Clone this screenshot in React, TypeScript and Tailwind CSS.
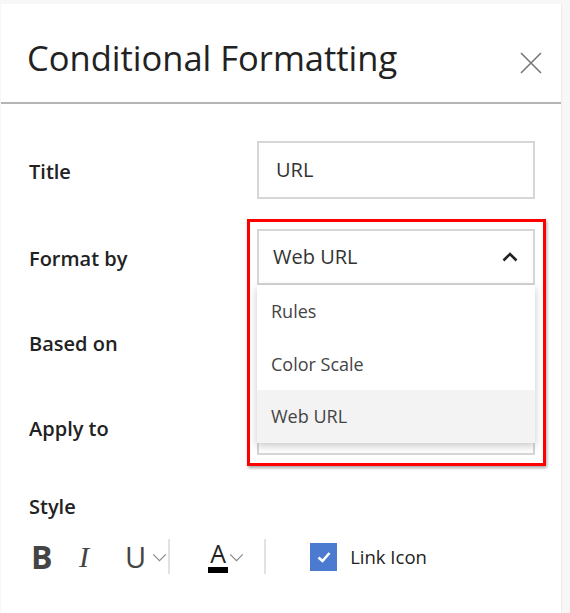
const font = { fontFamily: '"Open Sans", "Noto Sans", Arial, sans-serif' };

function Chevron({ className = "" }: { className?: string }) {
  return (
    <svg viewBox="0 0 16 10" className={className} fill="none" stroke="currentColor">
      <path d="M1 1.5 L8 8.5 L15 1.5" strokeWidth="1.3" />
    </svg>
  );
}

function Row({ label, children, first }: { label: string; children?: React.ReactNode; first?: boolean }) {
  return (
    <div className={`flex items-center ${first ? "h-[58px] mb-[30px]" : "h-[56px] mb-[29px]"}`}>
      <div className="w-[228px] mt-[3px] text-[20px] font-semibold text-[#222]">{label}</div>
      <div className="w-[278px] h-full border-2 border-[#d6d6d6] flex items-center px-[17px] text-[20px] text-[#333]">
        {children}
      </div>
    </div>
  );
}

export default function App() {
  return (
    <div className="min-h-[613px] bg-[#f7f7f7] pt-[4px] pl-[1px]" style={font}>
      <div className="relative w-[561px] h-[609px] bg-white border-r border-[#ebebeb]">
        <div className="h-[100px] flex items-center justify-between pl-[26px] pr-[19px] pt-[10px] border-b-2 border-[#b5b5b5]">
          <h1 className="text-[34.5px] text-[#222] leading-none">Conditional Formatting</h1>
          <svg viewBox="0 0 22 22" className="w-[22px] h-[22px] mt-[10px]" stroke="#777" strokeWidth="1.6">
            <path d="M1 1 L21 21 M21 1 L1 21" />
          </svg>
        </div>

        <div className="pl-[28px] pt-[37px]">
          <Row label="Title" first>URL</Row>
          <Row label="Format by" />
          <Row label="Based on" />
          <Row label="Apply to" />

          <div className="text-[20px] font-semibold text-[#222] leading-[22px] mt-[41px]">Style</div>
          <div className="flex items-center h-[35px] mt-[21px] text-[#444]">
            <span className="w-[48px] text-[32px] font-bold leading-none ml-[2px]">B</span>
            <span className="w-[46px] text-[30px] italic leading-none" style={{ fontFamily: '"Liberation Serif", serif' }}>I</span>
            <span className="text-[29px] leading-none">U</span>
            <Chevron className="w-[15px] h-[9px] ml-[6px] mt-[2px] text-[#888]" />
            <div className="w-[2px] h-[35px] bg-[#e2e2e2] ml-[1px]" />
            <div className="ml-[38px] flex flex-col items-center">
              <span className="text-[25px] leading-none text-[#222]">A</span>
              <div className="w-[20px] h-[6px] bg-black mt-[1px]" />
            </div>
            <Chevron className="w-[15px] h-[9px] ml-[1px] mt-[2px] text-[#888]" />
            <div className="w-[2px] h-[35px] bg-[#e2e2e2] ml-[20px]" />
            <div className="ml-[44px] w-[27px] h-[28px] bg-[#4a7bd0] flex items-center justify-center">
              <svg viewBox="0 0 16 16" className="w-[16px] h-[16px]" fill="none" stroke="white" strokeWidth="2.6">
                <path d="M2.5 8.5 L6.5 12 L13.5 4" />
              </svg>
            </div>
            <span className="ml-[13px] text-[18.5px] text-[#222]">Link Icon</span>
          </div>
        </div>

        {/* open dropdown */}
        <div className="absolute left-[256px] top-[225px] w-[278px] h-[56px] border-2 border-[#d6d6d6] bg-white flex items-center justify-between px-[14px] text-[20px] text-[#333]">
          <span>Web URL</span>
          <svg viewBox="0 0 16 10" className="w-[16px] h-[10px] mr-[1px]" fill="none" stroke="#222" strokeWidth="2.6">
            <path d="M1.5 8.5 L8 2 L14.5 8.5" />
          </svg>
        </div>
        <div className="absolute left-[256px] top-[281px] w-[278px] bg-white shadow-[0_3px_8px_rgba(0,0,0,0.22)] text-[18px] text-[#444]">
          <div className="h-[53px] flex items-center px-[14px]">Rules</div>
          <div className="h-[52px] flex items-center px-[14px]">Color Scale</div>
          <div className="h-[53px] flex items-center px-[14px] bg-[#f3f3f3]">Web URL</div>
        </div>
        <div className="absolute left-[246px] top-[215px] w-[299px] h-[247px] border-[3px] border-[#f00] shadow-[1px_2px_3px_rgba(0,0,0,0.35)]" />
      </div>
    </div>
  );
}
